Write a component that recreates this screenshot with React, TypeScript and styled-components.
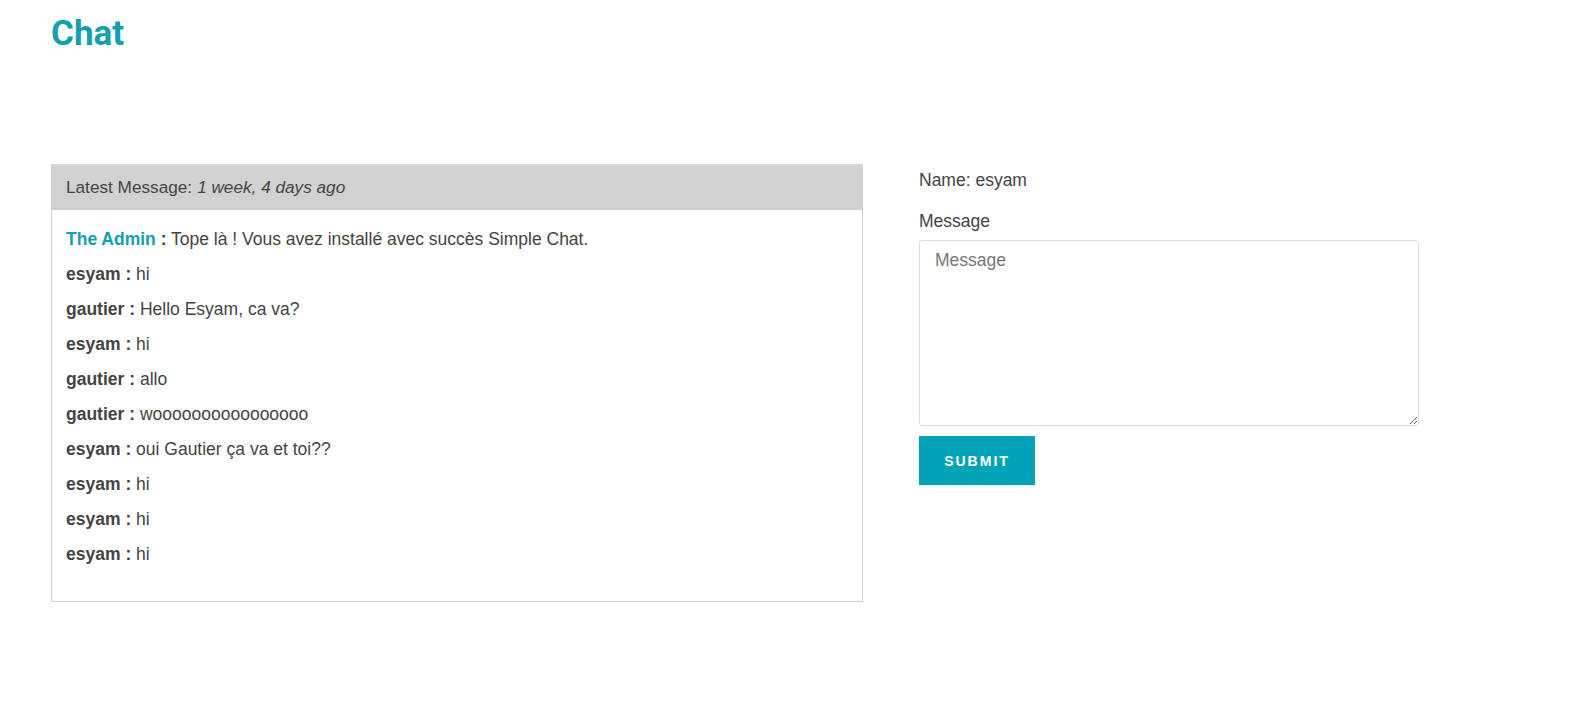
import React, { useState } from "react";
import styled, { createGlobalStyle } from "styled-components";

const GlobalStyle = createGlobalStyle`
    body {
        margin: 0;
        background: #fff;
        font-family: "Liberation Sans", Arial, sans-serif;
        color: #444;
    }
`;

const Page = styled.div`
    padding: 14px 51px 40px;
`;

const Title = styled.h1`
    margin: 0;
    font-family: Roboto, "Liberation Sans", sans-serif;
    font-weight: 700;
    font-size: 35px;
    line-height: 40px;
    color: #139fb0;
`;

const Columns = styled.div`
    display: flex;
    align-items: flex-start;
    gap: 56px;
    margin-top: 110px;
`;

const ChatBox = styled.div`
    width: 812px;
    box-sizing: border-box;
    border: 1px solid #cfcfcf;
    border-top: 2px solid #d6d6d6;
`;

const ChatHeader = styled.div`
    background: #d1d1d1;
    height: 44px;
    display: flex;
    align-items: center;
    padding: 0 14px 1px;
    box-sizing: border-box;
    font-size: 17.2px;
    color: #444;

    em {
        margin-left: 5px;
    }
`;

const ChatBody = styled.div`
    padding: 17px 14px 24px;
`;

const Line = styled.p`
    margin: 0 0 10px;
    font-size: 17.5px;
    line-height: 25px;
    color: #444;
`;

const Author = styled.strong<{ $admin?: boolean }>`
    font-weight: 700;
    color: ${props => (props.$admin ? "#139fb0" : "#444")};
`;

const FormSide = styled.div`
    width: 500px;
    padding-top: 4px;
`;

const Field = styled.div`
    font-size: 17.5px;
    line-height: 24px;
    margin-bottom: 17px;
`;

const Label = styled.label`
    display: block;
    font-size: 17.5px;
    line-height: 24px;
    margin-bottom: 7px;
`;

const TextArea = styled.textarea`
    display: block;
    width: 500px;
    height: 186px;
    box-sizing: border-box;
    border: 1px solid #dcdcdc;
    border-radius: 3px;
    padding: 9px 15px;
    font-family: "Liberation Sans", Arial, sans-serif;
    font-size: 17.5px;
    color: #444;
    resize: both;
    outline: none;

    &::placeholder {
        color: #777;
    }
`;

const SubmitButton = styled.button`
    margin-top: 10px;
    width: 116px;
    height: 49px;
    border: none;
    background: #00a4b6;
    color: #fff;
    font-family: "Liberation Sans", Arial, sans-serif;
    font-weight: 700;
    font-size: 14px;
    letter-spacing: 2px;
    text-transform: uppercase;
    cursor: pointer;
`;

const messages = [
    { author: "The Admin", text: "Tope là ! Vous avez installé avec succès Simple Chat.", admin: true },
    { author: "esyam", text: "hi" },
    { author: "gautier", text: "Hello Esyam, ca va?" },
    { author: "esyam", text: "hi" },
    { author: "gautier", text: "allo" },
    { author: "gautier", text: "woooooooooooooooo" },
    { author: "esyam", text: "oui Gautier ça va et toi??" },
    { author: "esyam", text: "hi" },
    { author: "esyam", text: "hi" },
    { author: "esyam", text: "hi" },
];

export default function App() {
    const [message, setMessage] = useState("");

    return (
        <Page>
            <GlobalStyle />
            <Title>Chat</Title>
            <Columns>
                <ChatBox>
                    <ChatHeader>
                        Latest Message: <em>1 week, 4 days ago</em>
                    </ChatHeader>
                    <ChatBody>
                        {messages.map((m, i) => (
                            <Line key={i}>
                                <Author $admin={m.admin}>{m.author}</Author> <strong>:</strong> {m.text}
                            </Line>
                        ))}
                    </ChatBody>
                </ChatBox>
                <FormSide>
                    <Field>Name: esyam</Field>
                    <Label htmlFor="message">Message</Label>
                    <TextArea
                        id="message"
                        placeholder="Message"
                        value={message}
                        onChange={e => setMessage(e.target.value)}
                    />
                    <SubmitButton type="button">Submit</SubmitButton>
                </FormSide>
            </Columns>
        </Page>
    );
}
